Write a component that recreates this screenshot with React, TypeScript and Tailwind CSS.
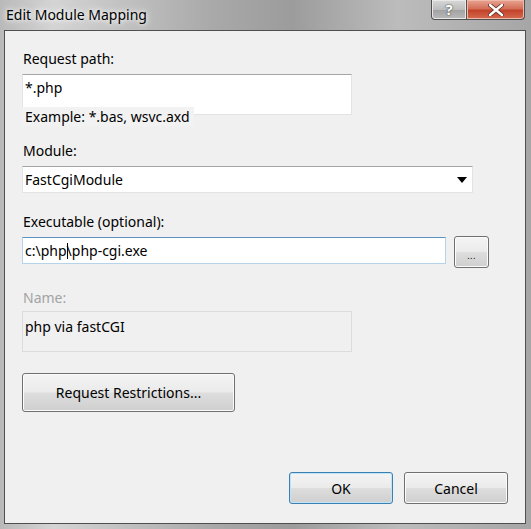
import React from "react";

const font = { fontFamily: '"Noto Sans", "Open Sans", sans-serif' };

function Btn({
  children,
  className = "",
  primary = false,
}: {
  children: React.ReactNode;
  className?: string;
  primary?: boolean;
}) {
  return (
    <div
      className={
        "rounded-[3px] border flex items-center justify-center text-[14px] text-black " +
        (primary
          ? "border-[#3c7fb1] shadow-[inset_0_0_0_1px_#bfe4fa] "
          : "border-[#707070] shadow-[inset_0_0_0_1px_#fbfbfb] ") +
        "bg-[linear-gradient(to_bottom,#f4f4f4_0%,#ebebeb_48%,#dddddd_52%,#cfcfcf_100%)] " +
        className
      }
    >
      {children}
    </div>
  );
}

export default function App() {
  return (
    <div
      className="w-[531px] h-[529px] flex flex-col overflow-hidden bg-[linear-gradient(90deg,#b9b9b9_0%,#d4d4d4_10%,#a9a9a9_40%,#9c9c9c_55%,#bcbcbc_75%,#a6a6a6_100%)]"
      style={font}
    >
      {/* Title bar */}
      <div className="h-[30px] flex items-start shrink-0 relative">
        <div className="pl-[6px] pt-[5px] text-[14px] leading-[20px] text-black [text-shadow:0_0_8px_#ffffff,0_0_4px_#ffffff]">
          Edit Module Mapping
        </div>
        <div className="ml-auto mr-[6px] flex h-[20px]">
          <div className="w-[36px] h-[20px] border border-[#505050] border-t-0 rounded-bl-[4px] bg-[linear-gradient(to_bottom,#d8d8d8_0%,#bdbdbd_50%,#a3a3a3_55%,#b9b9b9_100%)] flex items-center justify-center shadow-[inset_0_0_0_1px_#e8e8e8]">
            <span className="text-[15px] font-bold text-white leading-none [text-shadow:0_0_2px_#555,0_0_1px_#333]">?</span>
          </div>
          <div className="w-[58px] h-[20px] border border-[#505050] border-l-0 border-t-0 rounded-br-[4px] bg-[linear-gradient(to_bottom,#e8a593_0%,#d46f59_45%,#c2432a_55%,#d46b4f_100%)] flex items-center justify-center shadow-[inset_0_0_0_1px_#f0b8a8]">
            <svg width="16" height="12" viewBox="0 0 16 12">
              <path d="M2 1 L14 11 M14 1 L2 11" stroke="#5a2a20" strokeWidth="4" strokeLinecap="round" />
              <path d="M2 1 L14 11 M14 1 L2 11" stroke="#ffffff" strokeWidth="2.5" strokeLinecap="round" />
            </svg>
          </div>
        </div>
      </div>

      {/* Client area */}
      <div className="flex-1 ml-[4px] mr-[5px] mb-[5px] border border-[#4f4f4f] bg-[#f0f0f0] flex flex-col pl-[17px] pb-[19px]">
        <div className="mt-[18px] text-[14px] leading-[19px] pl-[1px] text-black">Request path:</div>
        <div className="mt-[6px] w-[330px] h-[41px] bg-white border border-[#e3e3e3] border-t-[#a5a5a5] pl-[2px] pt-[3px] text-[14px] leading-[19px] text-black">
          *.php
        </div>
        <div className="-mt-[8px] relative self-start bg-[#f2f2f2] pl-[3px] pr-[4px] text-[14px] leading-[19px] text-black">
          Example: *.bas, wsvc.axd
        </div>

        <div className="mt-[15px] text-[14px] leading-[19px] pl-[1px] text-black">Module:</div>
        <div className="mt-[6px] w-[451px] h-[27px] bg-white border border-[#e3e3e3] border-t-[#a5a5a5] pl-[2px] pr-[5px] flex items-center text-[14px] text-black">
          <span>FastCgiModule</span>
          <svg className="ml-auto" width="10" height="6" viewBox="0 0 10 6">
            <path d="M0 0 H10 L5 6 Z" fill="#000" />
          </svg>
        </div>

        <div className="mt-[19px] text-[14px] leading-[19px] pl-[1px] text-black">Executable (optional):</div>
        <div className="mt-[5px] flex items-start">
          <div className="mt-[1px] w-[424px] h-[27px] bg-white border border-[#b5d3ea] border-t-[#5a93c2] pl-[2px] flex items-center text-[14px] text-black">
            <span>c:\php</span>
            <span className="inline-block w-[1px] h-[16px] bg-black -mr-[1px]"></span>
            <span>\php-cgi.exe</span>
          </div>
          <Btn className="ml-[8px] w-[35px] h-[32px]">
            <span className="mt-[6px] text-[9px] leading-none tracking-[0.5px]">...</span>
          </Btn>
        </div>

        <div className="mt-[20px] text-[14px] leading-[19px] pl-[1px] text-[#a3a3a3]">Name:</div>
        <div className="mt-[4px] w-[330px] h-[41px] bg-[#f0f0f0] border border-[#dcdcdc] pl-[2px] pt-[5px] text-[14px] leading-[19px] text-black">
          php via fastCGI
        </div>

        <Btn className="mt-[21px] w-[213px] h-[39px]">Request Restrictions...</Btn>

        <div className="mt-auto flex justify-end pr-[17px] gap-[11px]">
          <Btn primary className="w-[104px] h-[32px]">OK</Btn>
          <Btn className="w-[104px] h-[32px]">Cancel</Btn>
        </div>
      </div>
    </div>
  );
}
